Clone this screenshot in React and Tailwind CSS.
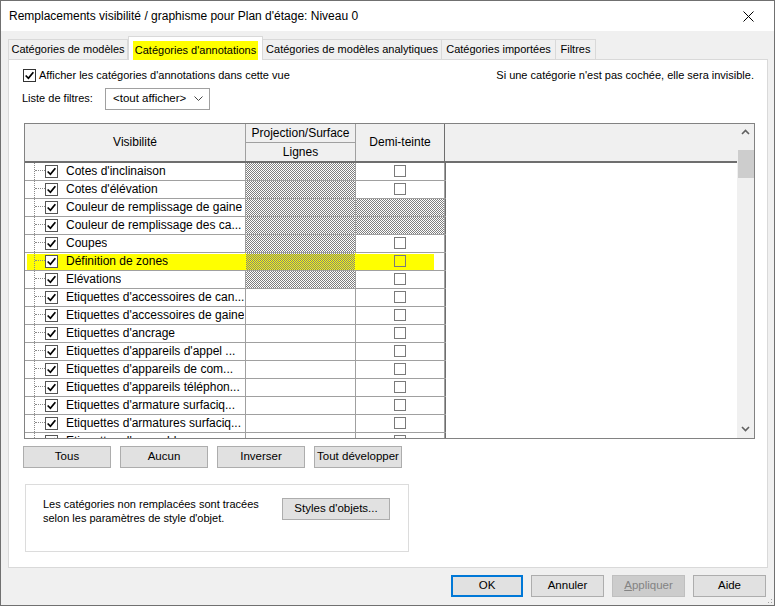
import React from "react";

const rows = [
  { t: "Cotes d'inclinaison", p: true, d: false },
  { t: "Cotes d'élévation", p: true, d: false },
  { t: "Couleur de remplissage de gaine", p: true, d: true },
  { t: "Couleur de remplissage des ca...", p: true, d: true },
  { t: "Coupes", p: true, d: false },
  { t: "Définition de zones", p: true, d: false, hl: true },
  { t: "Elévations", p: true, d: false },
  { t: "Etiquettes d'accessoires de can...", p: false, d: false },
  { t: "Etiquettes d'accessoires de gaine", p: false, d: false },
  { t: "Etiquettes d'ancrage", p: false, d: false },
  { t: "Etiquettes d'appareils d'appel ...", p: false, d: false },
  { t: "Etiquettes d'appareils de com...", p: false, d: false },
  { t: "Etiquettes d'appareils téléphon...", p: false, d: false },
  { t: "Etiquettes d'armature surfaciq...", p: false, d: false },
  { t: "Etiquettes d'armatures surfaciq...", p: false, d: false },
  { t: "Etiquettes d'assemblages", p: false, d: false },
];

const hatch =
  "[background-image:repeating-conic-gradient(#7f7f7f_0%_25%,transparent_0%_50%)] [background-size:2px_2px]";

// Case a cocher avec coche noire
const Check = ({ size = 12, border = "border-[#333333]" }) => (
  <div
    className={`shrink-0 border ${border} bg-white flex items-center justify-center`}
    style={{ width: size, height: size }}
  >
    <svg width={size - 2} height={size - 2} viewBox="0 0 10 10">
      <path d="M1.5 5 L4 7.5 L8.5 2" fill="none" stroke="#000" strokeWidth="1.6" />
    </svg>
  </div>
);

const Button = ({ children, className = "" }) => (
  <button
    className={`h-[22px] bg-[#e1e1e1] border border-[#adadad] text-[11.5px] text-black flex items-center justify-center ${className}`}
  >
    {children}
  </button>
);

const Row = ({ r }) => (
  <div className="relative h-[18px] flex border-b border-[#a0a0a0] text-[12px]">
    {r.hl && <div className="absolute left-[2px] w-[407px] top-[1px] bottom-0 bg-[#ffff00]"></div>}
    <div
      className={`relative w-[221px] shrink-0 flex items-center border-r ${
        r.hl ? "border-[#ffff00]" : "border-[#a0a0a0]"
      }`}
    >
      <div className="w-[9px] shrink-0"></div>
      <div className="w-[11px] h-[19px] -mt-px shrink-0 border-l border-dotted border-[#8a8a8a] flex items-center">
        <div className="w-full border-t border-dotted border-[#8a8a8a]"></div>
      </div>
      <Check size={13} border="border-[#555555]" />
      <span className="ml-[8px] whitespace-nowrap overflow-hidden">{r.t}</span>
    </div>
    <div
      className={`relative w-[110px] shrink-0 border-r ${r.p ? hatch : ""} ${
        r.hl ? "border-[#ffff00]" : "border-[#a0a0a0]"
      }`}
    ></div>
    <div
      className={`relative w-[89px] shrink-0 border-r border-[#a0a0a0] flex items-center justify-center ${
        r.d ? hatch : ""
      }`}
    >
      {!r.d && <div className="w-[12px] h-[12px] border border-[#7a7a7a]"></div>}
    </div>
  </div>
);

const Chevron = ({ up }) => (
  <svg width="9" height="6" viewBox="0 0 9 6">
    <path
      d={up ? "M1 5 L4.5 1.5 L8 5" : "M1 1 L4.5 4.5 L8 1"}
      fill="none"
      stroke="#606060"
      strokeWidth="1.6"
    />
  </svg>
);

const App = () => {
  const tabs = [
    { t: "Catégories de modèles", w: "w-[120px]" },
    { t: "Catégories d'annotations", w: "w-[135px]", active: true },
    { t: "Catégories de modèles analytiques", w: "w-[179px]" },
    { t: "Catégories importées", w: "w-[114px]" },
    { t: "Filtres", w: "w-[40px]" },
  ];

  return (
    <div className="w-[775px] h-[606px] bg-[#f0f0f0] border border-[#707070] flex flex-col text-[11px] text-black [font-family:'Liberation_Sans',Arial,sans-serif] overflow-hidden">
      {/* Barre de titre */}
      <div className="h-[30px] bg-white flex items-center justify-between pl-[8px] pr-[20px] shrink-0">
        <span className="text-[12px]">Remplacements visibilité / graphisme pour Plan d'étage: Niveau 0</span>
        <svg width="11" height="11" viewBox="0 0 11 11">
          <path d="M0.5 0.5 L10.5 10.5 M10.5 0.5 L0.5 10.5" stroke="#000" strokeWidth="1" />
        </svg>
      </div>

      {/* Onglets */}
      <div className="pl-[7px] pt-[5px] flex items-end h-[28px] shrink-0">
        {tabs.map((tab) =>
          tab.active ? (
            <div
              key={tab.t}
              className={`${tab.w} h-[24px] -mb-px relative z-10 bg-white border border-b-0 border-[#d9d9d9] flex items-start justify-center pt-[4px]`}
            >
              <span className="bg-[#ffff00] px-[2px] py-[1px] whitespace-nowrap">{tab.t}</span>
            </div>
          ) : (
            <div
              key={tab.t}
              className={`${tab.w} h-[20px] bg-[#f0f0f0] border border-b-0 border-l-0 first:border-l border-[#d9d9d9] flex items-center justify-center whitespace-nowrap`}
            >
              {tab.t}
            </div>
          )
        )}
      </div>

      {/* Panneau */}
      <div className="ml-[7px] w-[760px] h-[509px] bg-white border border-[#d9d9d9] shrink-0 flex flex-col">
        <div className="flex items-center justify-between pl-[14px] pr-[13px] pt-[7px]">
          <div className="flex items-center">
            <Check size={13} border="border-[#333333]" />
            <span className="ml-[3px]">Afficher les catégories d'annotations dans cette vue</span>
          </div>
          <span>Si une catégorie n'est pas cochée, elle sera invisible.</span>
        </div>

        <div className="flex items-center pl-[13px] mt-[4px]">
          <span className="w-[83px]">Liste de filtres:</span>
          <div className="w-[105px] h-[22px] border border-[#a0a0a0] bg-white flex items-center justify-between pl-[7px] pr-[6px] text-[11.5px]">
            <span>&lt;tout afficher&gt;</span>
            <svg width="9" height="6" viewBox="0 0 9 6">
              <path d="M0.5 0.5 L4.5 4.5 L8.5 0.5" fill="none" stroke="#444" strokeWidth="1" />
            </svg>
          </div>
        </div>

        {/* Tableau */}
        <div className="ml-[15px] mt-[13px] w-[731px] h-[316px] border border-[#828282] flex overflow-hidden">
          <div className="flex-1 flex flex-col min-w-0">
            <div className="h-[39px] shrink-0 flex bg-[#f0f0f0] border-b-2 border-[#6e6e6e] text-[12px]">
              <div className="w-[221px] border-r border-[#a0a0a0] flex items-center justify-center">Visibilité</div>
              <div className="w-[110px] border-r border-[#a0a0a0] flex flex-col">
                <div className="h-[19px] border-b border-[#a0a0a0] flex items-center justify-center whitespace-nowrap">
                  Projection/Surface
                </div>
                <div className="flex-1 flex items-center justify-center">Lignes</div>
              </div>
              <div className="w-[89px] border-r border-[#6e6e6e] flex items-center justify-center">Demi-teinte</div>
              <div className="flex-1"></div>
            </div>
            <div className="flex-1 flex overflow-hidden">
              <div className="w-[421px] shrink-0 flex flex-col">
                {rows.map((r) => (
                  <Row key={r.t} r={r} />
                ))}
              </div>
              <div className="flex-1 bg-white border-l border-[#6e6e6e] -ml-px"></div>
            </div>
          </div>
          <div className="w-[17px] shrink-0 bg-[#f0f0f0] flex flex-col items-center">
            <div className="h-[17px] w-full flex items-center justify-center">
              <Chevron up />
            </div>
            <div className="mt-[9px] h-[28px] w-[16px] bg-[#cdcdcd]"></div>
            <div className="flex-1"></div>
            <div className="h-[17px] w-full flex items-center justify-center">
              <Chevron />
            </div>
          </div>
        </div>

        {/* Boutons de selection */}
        <div className="flex gap-[9px] ml-[14px] mt-[7px]">
          <Button className="w-[88px]">Tous</Button>
          <Button className="w-[88px]">Aucun</Button>
          <Button className="w-[88px]">Inverser</Button>
          <Button className="w-[88px] whitespace-nowrap">Tout développer</Button>
        </div>

        {/* Groupe */}
        <div className="ml-[16px] mt-[16px] w-[384px] h-[68px] border border-[#dcdcdc] flex items-start pl-[17px] pt-[12px]">
          <div className="w-[239px] leading-[14px] whitespace-nowrap">
            Les catégories non remplacées sont tracées
            <br />
            selon les paramètres de style d'objet.
          </div>
          <Button className="w-[108px] mt-[1px]">Styles d'objets...</Button>
        </div>
      </div>

      {/* Pied */}
      <div className="flex justify-end gap-[8px] pr-[8px] mt-[7px]">
        <button className="w-[72px] h-[22px] bg-[#e1e1e1] border-2 border-[#0078d7] text-[11.5px] flex items-center justify-center">
          OK
        </button>
        <Button className="w-[73px]">Annuler</Button>
        <button className="w-[73px] h-[22px] bg-[#cccccc] border border-[#bfbfbf] text-[#838383] text-[11.5px] flex items-center justify-center">
          <span className="underline">A</span>ppliquer
        </button>
        <Button className="w-[73px]">Aide</Button>
      </div>
      <div className="flex-1 flex justify-end items-end pr-[1px] pb-[1px]">
        <svg width="10" height="10" viewBox="0 0 10 10">
          <g fill="#a0a0a0">
            <rect x="8" y="2" width="1" height="1" />
            <rect x="5" y="5" width="1" height="1" />
            <rect x="8" y="5" width="1" height="1" />
            <rect x="2" y="8" width="1" height="1" />
            <rect x="5" y="8" width="1" height="1" />
            <rect x="8" y="8" width="1" height="1" />
          </g>
        </svg>
      </div>
    </div>
  );
};

export default App;
